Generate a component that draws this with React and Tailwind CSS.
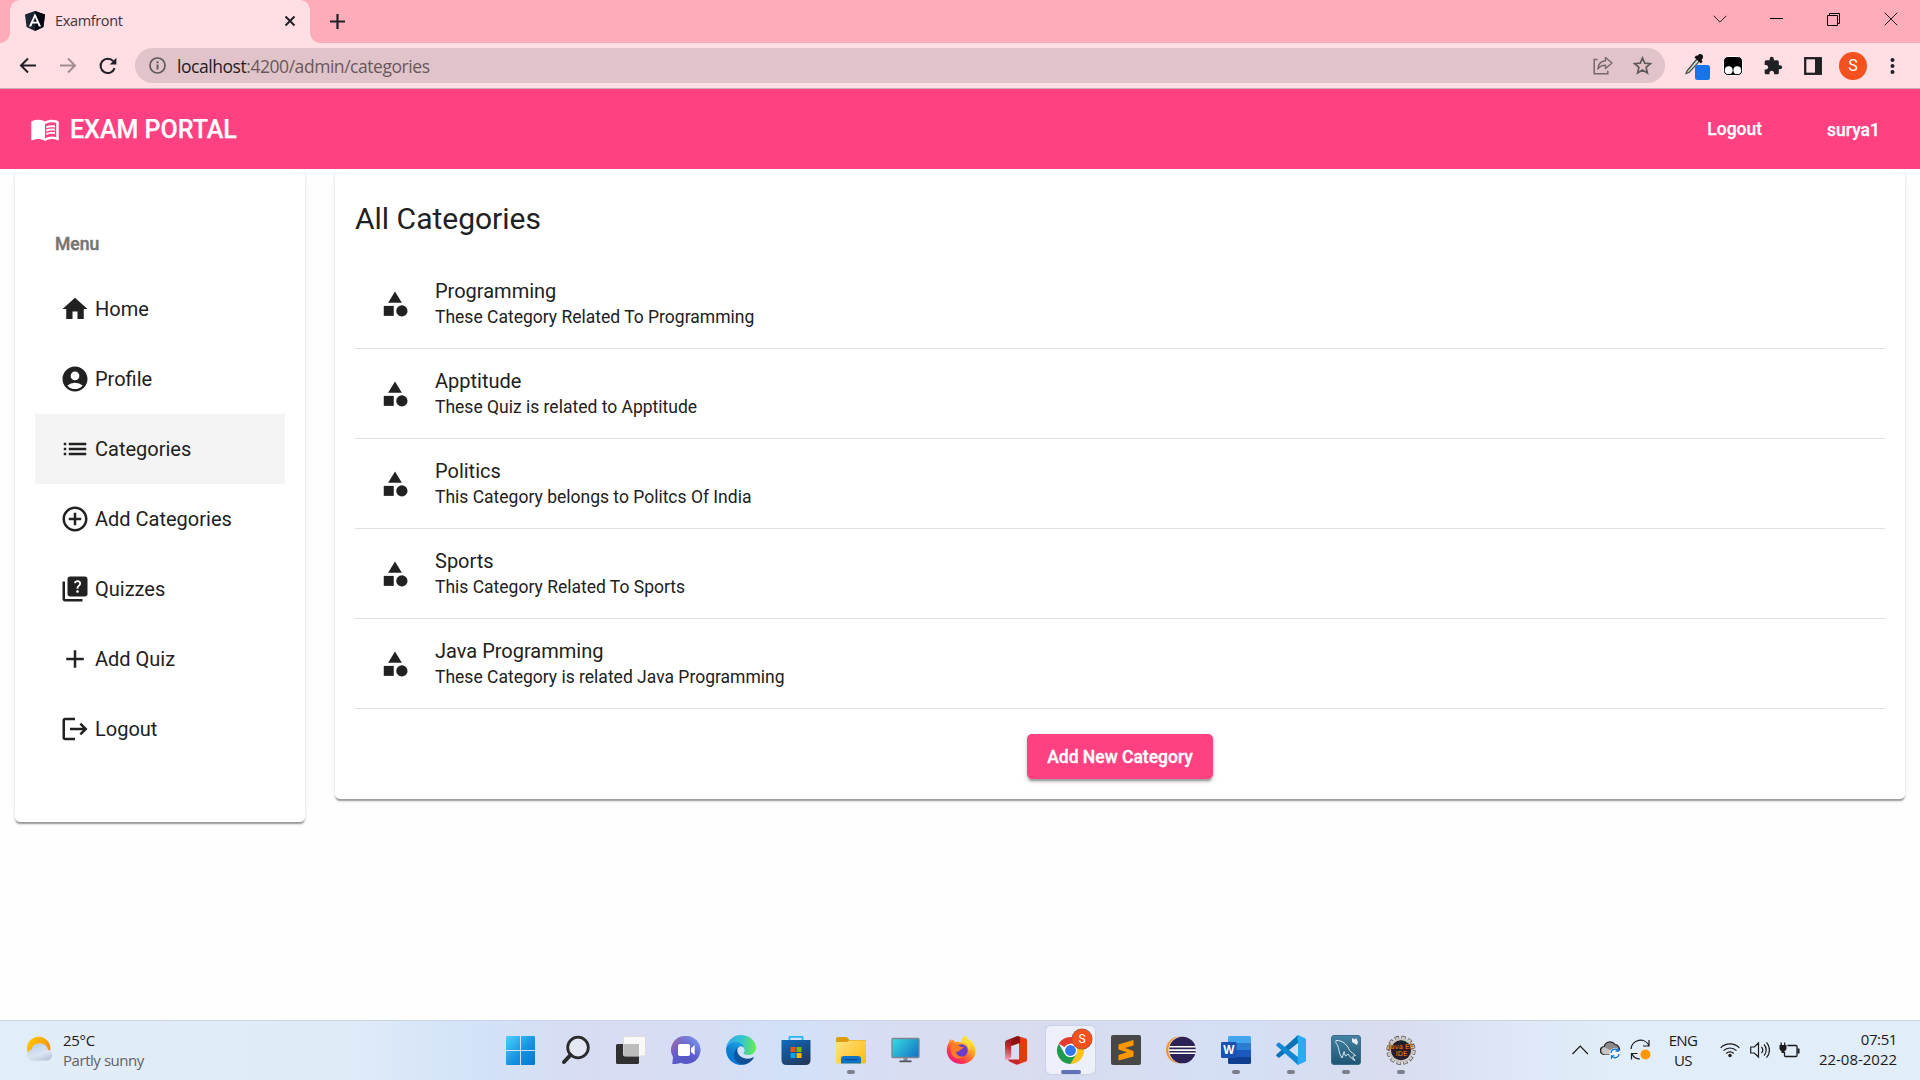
import React from "react";
import {
  MdHome,
  MdAccountCircle,
  MdList,
  MdAddCircleOutline,
  MdQuiz,
  MdAdd,
  MdLogout,
  MdCategory,
  MdMenuBook,
  MdExtension,
} from "react-icons/md";

const segoe = "font-['Open_Sans','Noto_Sans',sans-serif]";

function Svg({ w = 30, h = w, vb, className = "", children }) {
  return (
    <svg width={w} height={h} viewBox={vb || `0 0 ${w} ${h}`} className={`block shrink-0 ${className}`} fill="none">
      {children}
    </svg>
  );
}

/* ---------- Browser chrome ---------- */

function TabStrip() {
  return (
    <div className="flex h-[43px] bg-[#ffacba] pl-[10px]">
      <div className="relative flex h-[43px] w-[300px] items-center rounded-t-[10px] bg-[#ffdee4] pl-[15px] pr-[14px]">
        <div className="absolute -left-[10px] bottom-0 h-[10px] w-[10px] bg-[radial-gradient(circle_at_0_0,#ffacba_9.5px,#ffdee4_10px)]" />
        <div className="absolute -right-[10px] bottom-0 h-[10px] w-[10px] bg-[radial-gradient(circle_at_100%_0,#ffacba_9.5px,#ffdee4_10px)]" />
        <Svg w={20} className="-mt-[1px]">
          <path d="M10 0 20 3.4 18.4 16 10 20 1.6 16 0 3.4Z" fill="#1d2432" />
          <path d="M10 0 20 3.4 18.4 16 10 20Z" fill="#04070f" />
          <path d="M10 2.3 3.9 15.6h2.3l1.2-3h5.2l1.2 3h2.3Zm0 4.3 1.8 4.2H8.200Z" fill="#fff" fillRule="evenodd" />
        </Svg>
        <span className={`ml-[10px] flex-1 -mt-[2px] text-[14.5px] leading-5 tracking-[-0.35px] text-[#3c3237] ${segoe}`}>Examfront</span>
        <Svg w={12} className="-mt-[1px]">
          <path d="m1.500 1.500 9 9m0-9-9 9" stroke="#202124" strokeWidth="2" />
        </Svg>
      </div>
      <Svg w={16} className="ml-[19px] mt-[13px]">
        <path d="M8.500 1v15M1 8.500h15" stroke="#202124" strokeWidth="2.200" />
      </Svg>
      <div className="flex-1" />
      <div className="flex h-[37px] items-center">
        <div className="flex w-[57px] justify-center">
          <Svg w={14} h={8}>
            <path d="m.7.8 6.300 6.300L13.300.8" stroke="#222" />
          </Svg>
        </div>
        <div className="flex w-[57px] justify-center">
          <div className="h-px w-[13px] bg-black" />
        </div>
        <div className="flex w-[57px] justify-center">
          <Svg w={14}>
            <path d="M.5 3.500h10v10H.5zM2.500 3.500v-2h10v10h-2" stroke="#000" />
          </Svg>
        </div>
        <div className="flex w-[58px] justify-center">
          <Svg w={14}>
            <path d="m.7.7 12.600 12.600m0-12.600L.7 13.300" stroke="#222" />
          </Svg>
        </div>
      </div>
    </div>
  );
}

function Toolbar() {
  return (
    <div className="flex h-[46px] items-center border-b border-[#c3b2b8] bg-[#ffdee4] pl-[8px]">
      <div className="flex w-[39px] justify-center">
        <Svg w={18}>
          <path d="M17 8.500H2M9 1.500 2 8.500l7 7" stroke="#202124" strokeWidth="2" />
        </Svg>
      </div>
      <div className="flex w-[41px] justify-center">
        <Svg w={18}>
          <path d="M1 8.500h15M9 1.500l7 7-7 7" stroke="#a08d92" strokeWidth="2" />
        </Svg>
      </div>
      <div className="flex w-[40px] justify-center">
        <Svg w={18}>
          <path d="M15.600 11.200A7.200 7.200 0 1 1 14.300 4.200" stroke="#202124" strokeWidth="2" />
          <path d="M17.400.8v6.700h-6.700Z" fill="#202124" />
        </Svg>
      </div>
      <div className="ml-[7px] flex h-[35px] w-[1530px] items-center rounded-full bg-[#e0c4c9] pl-[14px] pr-[13px]">
        <Svg w={17}>
          <circle cx="8.500" cy="8.500" r="7.500" stroke="#5f5a5e" strokeWidth="1.700" />
          <path d="M8.500 7.500v5M8.500 4.300v1.900" stroke="#5f5a5e" strokeWidth="1.900" />
        </Svg>
        <div className={`ml-[11px] flex-1 text-[17.5px] leading-6 tracking-[-0.45px] text-[#68585d] ${segoe}`}>
          <span className="text-[#202124]">localhost</span>:4200/admin/categories
        </div>
        <Svg w={20} className="mr-[20px]">
          <path d="M4.500 3.500h-3.300v14.300h13.600v-3" stroke="#75686c" strokeWidth="1.500" />
          <path d="M12.500 1.500 19 7l-6.500 5.500V9.300c-3.500 0-6 1.200-7.700 3.700.4-4.700 3.200-8 7.700-8.300Z" stroke="#75686c" strokeWidth="1.400" strokeLinejoin="round" />
        </Svg>
        <Svg w={19}>
          <path d="m9.500 2 2.200 5.200 5.700.5-4.300 3.700 1.300 5.500-4.900-2.900-4.900 2.900 1.300-5.500L1.600 7.700l5.700-.5Z" stroke="#5f5a5e" strokeWidth="1.700" />
        </Svg>
      </div>
      <div className="ml-[8px] grid grid-cols-[40px_40px_40px_40px_40px_40px] items-center justify-items-center">
        <Svg w={26} h={30} className="ml-[9px]">
          <path d="M2 20 12 8l2.300 2.300L4 21.500l-3 1Z" fill="#cfe3d2" stroke="#3f4a43" strokeWidth="1.200" />
          <path d="m9.500 6.500 6.500 6 1.500-2-1-1.500c2-1.700 2-4 .7-5.200s-3.500-.8-4.700 1L11 4.500Z" fill="#161013" />
          <rect x="10" y="14" width="15" height="15" rx="2.500" fill="#1a73e8" />
        </Svg>
        <Svg w={20}>
          <rect x=".5" y=".5" width="19" height="19" rx="4.500" fill="#000" stroke="#fff" />
          <circle cx="5.700" cy="14.200" r="3.900" fill="#fff" />
          <circle cx="14.300" cy="14.200" r="3.900" fill="#fff" />
        </Svg>
        <MdExtension className="block h-[20px] w-[20px] text-[#202124]" />
        <Svg w={18}>
          <rect x="1.200" y="1.200" width="15.600" height="15.600" stroke="#202124" strokeWidth="2.300" />
          <path d="M11 1h6v16h-6z" fill="#202124" />
        </Svg>
        <div className="flex h-[28px] w-[28px] items-center justify-center rounded-full bg-[#f4511e] font-[Roboto,sans-serif] text-[16px] text-white">S</div>
        <Svg w={18}>
          <circle cx="8.500" cy="3" r="2" fill="#202124" />
          <circle cx="8.500" cy="9" r="2" fill="#202124" />
          <circle cx="8.500" cy="15" r="2" fill="#202124" />
        </Svg>
      </div>
    </div>
  );
}

/* ---------- Application ---------- */

const menu = [
  { label: "Home", Icon: MdHome },
  { label: "Profile", Icon: MdAccountCircle },
  { label: "Categories", Icon: MdList, active: true },
  { label: "Add Categories", Icon: MdAddCircleOutline },
  { label: "Quizzes", Icon: MdQuiz },
  { label: "Add Quiz", Icon: MdAdd },
  { label: "Logout", Icon: MdLogout },
];

const categories = [
  ["Programming", "These Category Related To Programming"],
  ["Apptitude", "These Quiz is related to Apptitude"],
  ["Politics", "This Category belongs to Politcs Of India"],
  ["Sports", "This Category Related To Sports"],
  ["Java Programming", "These Category is related Java Programming"],
];

const cardShadow =
  "shadow-[0_2.5px_1.25px_-1.25px_rgba(0,0,0,0.2),0_1.25px_1.25px_0_rgba(0,0,0,0.14),0_1.25px_3.75px_0_rgba(0,0,0,0.12)]";

function Header() {
  return (
    <header className="z-10 flex h-[80px] shrink-0 items-center bg-[#ff4081] pl-[30px] pr-[40px] text-white [-webkit-text-stroke:0.25px]">
      <MdMenuBook className="block h-[30px] w-[30px]" />
      <span className="ml-[10px] mt-[2px] text-[25px] font-medium leading-[30px]">EXAM PORTAL</span>
      <div className="flex-1" />
      <span className="text-[17.5px] font-medium leading-[22px]">Logout</span>
      <span className="ml-[65px] mt-[2px] text-[17.5px] font-medium leading-[22px]">surya1</span>
    </header>
  );
}

function Sidebar() {
  return (
    <aside className={`h-[653px] w-[290px] rounded-[5px] bg-white px-[20px] pt-[64px] ${cardShadow}`}>
      <div className="mb-[19px] pl-[20px] text-[17.5px] font-medium leading-[22px] text-[#757575] [-webkit-text-stroke:0.45px]">Menu</div>
      {menu.map(({ label, Icon, active }) => (
        <div key={label} className={`flex h-[70px] items-center pl-[25px] ${active ? "bg-[#f4f4f4]" : ""}`}>
          <Icon className="block h-[30px] w-[30px]" />
          <span className="ml-[5px] text-[20px] leading-6">{label}</span>
        </div>
      ))}
    </aside>
  );
}

function Categories() {
  return (
    <section className={`ml-[30px] h-[630px] w-[1570px] rounded-[5px] bg-white px-[20px] pt-[32px] ${cardShadow}`}>
      <h1 className="mb-[23px] text-[30px] leading-[35px]">All Categories</h1>
      {categories.map(([title, text]) => (
        <div key={title} className="flex h-[90px] items-center border-b border-[#e0e0e0] pl-[25px]">
          <MdCategory className="block h-[30px] w-[30px] shrink-0" />
          <div className="ml-[25px]">
            <div className="text-[20px] leading-[24px]">{title}</div>
            <div className="mt-[2px] text-[17.5px] leading-[24px]">{text}</div>
          </div>
        </div>
      ))}
      <div className="mt-[25px] flex justify-center">
        <button className="h-[45px] w-[186px] whitespace-nowrap rounded-[5px] bg-[#ff4081] pt-[2px] text-[17.5px] font-medium text-white shadow-[0_3.75px_1.25px_-2.5px_rgba(0,0,0,0.2),0_2.5px_2.5px_0_rgba(0,0,0,0.14),0_1.25px_6.25px_0_rgba(0,0,0,0.12)] [-webkit-text-stroke:0.35px]">
          Add New Category
        </button>
      </div>
    </section>
  );
}

/* ---------- Taskbar ---------- */

const Start = () => (
  <Svg>
    <defs>
      <linearGradient id="st" x1="0" y1="0" x2="30" y2="30" gradientUnits="userSpaceOnUse">
        <stop stopColor="#4fd2ff" />
        <stop offset=".55" stopColor="#1593e0" />
        <stop offset="1" stopColor="#0873cf" />
      </linearGradient>
    </defs>
    <path d="M1.300 1H14v14H0V2.300Q0 1 1.300 1ZM15 1h12.700q1.300 0 1.300 1.300V15H15ZM0 16h14v14H1.300Q0 30 0 28.700ZM15 16h14v12.700q0 1.300-1.300 1.300H15Z" fill="url(#st)" />
  </Svg>
);

const Search = () => (
  <Svg>
    <circle cx="17" cy="12.500" r="10.300" fill="#e3e8f3" stroke="#2b2b2e" strokeWidth="2.800" />
    <path d="m9.500 20-6.500 7" stroke="#2b2b2e" strokeWidth="4" strokeLinecap="round" />
  </Svg>
);

const TaskView = () => (
  <Svg>
    <rect x="0" y="9" width="23" height="20" rx="1.500" fill="#303030" />
    <rect x="7.500" y="1.500" width="22" height="19.500" rx="1.500" fill="#f8f8f6" stroke="#dcdcdc" />
    <path d="M7.500 9H23v12H9q-1.500 0-1.500-1.500Z" fill="#bcbcbc" />
  </Svg>
);

const Chat = () => (
  <Svg>
    <defs>
      <linearGradient id="ch" x1="4" y1="3" x2="27" y2="24" gradientUnits="userSpaceOnUse">
        <stop stopColor="#9a6bab" />
        <stop offset=".45" stopColor="#5c5bc9" />
        <stop offset="1" stopColor="#5754c8" />
      </linearGradient>
      <linearGradient id="ch2" x1="28" y1="3" x2="14" y2="18" gradientUnits="userSpaceOnUse">
        <stop stopColor="#86a6ee" />
        <stop offset="1" stopColor="#6a76dc" stopOpacity="0" />
      </linearGradient>
    </defs>
    <path d="M15.500 1a14 14 0 1 1-6 26.700c-3 1.300-6 1.600-8.200 1.300L2 22A14 14 0 0 1 15.500 1Z" fill="url(#ch)" />
    <path d="M15.500 1a14 14 0 1 1-6 26.700c-3 1.300-6 1.600-8.200 1.300L2 22A14 14 0 0 1 15.500 1Z" fill="url(#ch2)" />
    <rect x="7" y="9" width="12" height="12" rx="1.800" fill="#fff" />
    <path d="m20 13.300 3.700-3.300v10L20 17Z" fill="#fff" />
  </Svg>
);

const Edge = () => (
  <Svg vb="0 0 256 256">
    <defs>
      <linearGradient id="e1" x1="60" y1="176" x2="240" y2="176" gradientUnits="userSpaceOnUse">
        <stop stopColor="#0c59a4" />
        <stop offset="1" stopColor="#114a8b" />
      </linearGradient>
      <linearGradient id="e2" x1="120" y1="80" x2="40" y2="230" gradientUnits="userSpaceOnUse">
        <stop stopColor="#1b9de2" />
        <stop offset=".5" stopColor="#0f7fd3" />
        <stop offset="1" stopColor="#0078d7" />
      </linearGradient>
      <linearGradient id="e3" x1="10" y1="70" x2="255" y2="100" gradientUnits="userSpaceOnUse">
        <stop stopColor="#35a9e4" />
        <stop offset=".5" stopColor="#33c3d4" />
        <stop offset="1" stopColor="#66eb4f" />
      </linearGradient>
    </defs>
    <g transform="translate(-4.63 -4.92)">
      <path d="M235.680 195.460a93.730 93.730 0 0 1-10.540 4.710 101.870 101.870 0 0 1-35.900 6.460c-47.320 0-88.540-32.550-88.540-74.320A31.480 31.480 0 0 1 117.130 105c-42.800 1.800-53.800 46.400-53.800 72.530 0 73.880 68.090 81.370 82.760 81.370 7.910 0 19.840-2.300 27-4.560l1.310-.44a128.340 128.340 0 0 0 66.600-52.800 4 4 0 0 0-5.320-5.640Z" fill="url(#e1)" />
      <path d="M110.340 246.340A79.200 79.200 0 0 1 87.600 225a80.720 80.720 0 0 1 29.530-120c3.120-1.470 8.450-4.130 15.540-4a32.350 32.350 0 0 1 25.690 13 31.880 31.880 0 0 1 6.360 18.660c0-.21 24.460-79.600-80-79.600-43.900 0-80 41.660-80 78.210a130.150 130.150 0 0 0 12.110 56 128 128 0 0 0 156.380 67.110 75.550 75.550 0 0 1-62.780-8Z" fill="url(#e2)" />
      <path d="M156.940 153.780c-.81 1.050-3.300 2.500-3.300 5.660 0 2.610 1.700 5.120 4.720 7.230 14.380 10 41.490 8.680 41.560 8.680a59.560 59.560 0 0 0 30.270-8.350 61.380 61.380 0 0 0 30.430-52.880c.26-22.410-8-37.310-11.340-43.910C228.090 28.760 182.350 4.920 132.610 4.920a128 128 0 0 0-128 126.200c.48-36.540 36.800-66.050 80-66.050 3.500 0 23.460.34 42 10.070 16.340 8.580 24.900 18.940 30.850 29.210 6.180 10.670 7.280 24.150 7.280 29.520s-2.740 13.330-7.800 19.910Z" fill="url(#e3)" />
    </g>
  </Svg>
);

const Store = () => (
  <Svg>
    <defs>
      <linearGradient id="so" x1="8" y1="5" x2="20" y2="30" gradientUnits="userSpaceOnUse">
        <stop stopColor="#0f67b5" />
        <stop offset="1" stopColor="#21395f" />
      </linearGradient>
    </defs>
    <path d="M8.500 6V1.800h13V6" stroke="#29b6f0" strokeWidth="1.800" strokeLinejoin="round" />
    <path d="M.5 5h29v20q0 5-5 5h-19q-5 0-5-5Z" fill="url(#so)" />
    <path d="M9.500 12H14.500v5h-5z" fill="#f25022" />
    <path d="M15.500 12h5v5h-5z" fill="#7fba00" />
    <path d="M9.500 18H14.500v5h-5z" fill="#00a4ef" />
    <path d="M15.500 18h5v5h-5z" fill="#ffb900" />
  </Svg>
);

const Explorer = () => (
  <Svg>
    <defs>
      <linearGradient id="ex" x1="4" y1="6" x2="28" y2="28" gradientUnits="userSpaceOnUse">
        <stop stopColor="#ffdf77" />
        <stop offset="1" stopColor="#fdbc15" />
      </linearGradient>
    </defs>
    <path d="M0 3.500Q0 2 1.500 2H10q1 0 1.800 1l1.700 2H29q1 0 1 1v4H0Z" fill="#dd9d10" />
    <path d="M0 7h11l2.500-1.500H30v22q0 1-1 1H1q-1 0-1-1Z" fill="url(#ex)" />
    <path d="M5 28.500V24q0-3 3-3h14q3 0 3 3v4.500Z" fill="#0f73c4" />
    <path d="M9 24.700h12" stroke="#0a4e8d" strokeWidth="1.200" strokeLinecap="round" />
  </Svg>
);

const Monitor = () => (
  <Svg>
    <defs>
      <linearGradient id="mo" x1="2" y1="4" x2="26" y2="24" gradientUnits="userSpaceOnUse">
        <stop stopColor="#36d9e0" />
        <stop offset="1" stopColor="#1471c4" />
      </linearGradient>
    </defs>
    <path d="M12.500 22h4v4h-4z" fill="#8b9198" />
    <path d="M8.500 25.500h12v1.700h-12z" fill="#4c5258" />
    <rect x="1" y="3.500" width="27" height="19" rx="1" fill="url(#mo)" stroke="#7b8790" strokeWidth="1.300" />
  </Svg>
);

const Firefox = () => (
  <Svg>
    <defs>
      <linearGradient id="ff" x1="24" y1="4" x2="6" y2="28" gradientUnits="userSpaceOnUse">
        <stop stopColor="#fff044" />
        <stop offset=".35" stopColor="#ff9c1f" />
        <stop offset=".7" stopColor="#ff3f47" />
        <stop offset="1" stopColor="#e8118f" />
      </linearGradient>
    </defs>
    <path d="M19 .5c2 1 3.500 3 4.200 5 .8-.3 1.300-.3 1.600-.2 3.200 3 4.700 7 4.700 10.700C29.500 23.500 23 29 15.500 29 7 29 .8 23 .8 15.500c0-3.500.9-6.700 2.700-9 .1-1 .2-1.700.6-2.500.7.6 1.200 1.400 1.500 2.200C6.500 5.300 7 5 7.700 4.600c.1 1.200.8 2.200 1.800 2.600 2-.7 4.500-.6 6 .3C15.300 4.500 17 2 19 .5Z" fill="url(#ff)" />
    <circle cx="15.500" cy="15.500" r="6.300" fill="#6a3cc8" />
    <path d="M4.500 10.500c3.500-2 8-1 10.500 1.500h3c-1 2.200-3.500 2.200-4.500 3.500-.7 1.500-3 1.500-3.500 1.500.5 3 3 5.500 7.500 4.500-4 4-10.500 1.500-12-3-.5-2-.7-4-1-8Z" fill="#ff7a25" />
    <path d="M15.500 8c4-1 8 2.500 7.300 8 2-3 1.500-6 .2-8.500-1-2-2.500-3.500-4-7C15.500 3 15 5.500 15.500 8Z" fill="#ffdc3a" />
  </Svg>
);

const Office = () => (
  <Svg>
    <defs>
      <linearGradient id="of" x1="15" y1="1" x2="5" y2="25" gradientUnits="userSpaceOnUse">
        <stop stopColor="#7a0d12" />
        <stop offset=".5" stopColor="#c6262c" />
        <stop offset="1" stopColor="#f4a3c6" />
      </linearGradient>
    </defs>
    <path d="M16.500 1v6.500L10.200 10v12.500L5.500 25.200 4 24V7.500q0-1.500 1.500-2.300Z" fill="url(#of)" />
    <path d="M16.500 1 25 3.500q1 .4 1 1.500v20q0 1-1 1.500L18 29V7.500Z" fill="#e03e0c" />
    <path d="M16.500 1 19 2v6l-8.800 3V7.500Z" fill="#8a1213" />
    <path d="M7 24.500h11.500V29l-3 .7-7.500-3.500Z" fill="#c9242b" />
  </Svg>
);

const Chrome = () => (
  <Svg>
    <path d="M14.500 15.500 2.800 8.750A13.500 13.500 0 0 1 26.200 8.750H14.500Z" fill="#e33b2e" />
    <path d="M20.350 18.880 14.500 29A13.500 13.500 0 0 0 26.200 8.750H14.500Z" fill="#fcc31e" />
    <path d="M8.650 18.880 2.800 8.750A13.500 13.500 0 0 0 14.500 29l5.850-10.120Z" fill="#1f9a4c" />
    <circle cx="14.500" cy="15.500" r="6.750" fill="#fff" />
    <circle cx="14.500" cy="15.500" r="5.400" fill="#3079ec" />
  </Svg>
);

const Sublime = () => (
  <Svg>
    <rect width="30" height="30" rx="2" fill="#474747" />
    <path d="M22.500 5v5.500L14 13l8.500 3v5.500L7.500 25.500V20l8.500-2.800-8.500-2.700V9.500Z" fill="#ff9800" />
  </Svg>
);

const Eclipse = () => (
  <Svg>
    <circle cx="13.500" cy="15" r="13.500" fill="#f7941e" />
    <circle cx="16" cy="15" r="13.700" fill="#d9ddf0" />
    <circle cx="16.500" cy="15" r="13.300" fill="#2c2255" />
    <path d="M3.500 11h26.300v1.500H3.200zM3 14.300h27v1.600H3zM3.200 17.500h26.500V19H3.500z" fill="#fff" />
  </Svg>
);

const Word = () => (
  <Svg>
    <path d="M7 2.500Q7 1 8.500 1h20Q30 1 30 2.500V8H7Z" fill="#41a5ee" />
    <path d="M7 8h23v7H7z" fill="#2b7cd3" />
    <path d="M7 15h23v7H7z" fill="#185abd" />
    <path d="M7 22h23v5.500q0 1.500-1.500 1.500h-20Q7 29 7 27.500Z" fill="#103f91" />
    <rect x="0" y="7" width="15.500" height="16" rx="1.300" fill="#1a52b3" />
    <text x="7.700" y="19" textAnchor="middle" fill="#fff" fontSize="11.500" fontWeight="700" fontFamily="Open Sans, sans-serif">W</text>
  </Svg>
);

const Vscode = () => (
  <Svg>
    <path d="M22 0v8L3.500 22.500q-.7.500-1.300 0L.5 21q-.7-.8 0-1.500Z" fill="#0b72b8" />
    <path d="M22 30v-8L3.500 7.700q-.7-.5-1.300 0L.5 9.200q-.7.800 0 1.500Z" fill="#1289d2" />
    <path d="M22 0 29 3.200q1 .5 1 1.500v20.600q0 1-1 1.500L22 30Z" fill="#29aaf2" />
    <path d="m22 0-1.500 1.500L22 7.500v15l-1.500 6L22 30Z" fill="#1b95dd" />
  </Svg>
);

const Workbench = () => (
  <Svg>
    <defs>
      <linearGradient id="wb" x1="0" y1="0" x2="0" y2="30" gradientUnits="userSpaceOnUse">
        <stop stopColor="#4683a4" />
        <stop offset="1" stopColor="#1e5470" />
      </linearGradient>
    </defs>
    <rect x=".5" y=".5" width="29" height="29" rx="2.500" fill="url(#wb)" stroke="#3b6d88" />
    <path d="M5 5.500c6-.5 11 3.500 13.500 10 1.500 1.700 4 3 6 5-2 .3-2.500.5-3 1.500l2.500 3.500c-2.500-1-5-3.500-7-6.500l-2.500 2c-1-1.500-1-3-1.300-4.500L11 23C7 17 8.500 13 6 9.500 5 8 4.500 7 5 5.500Z" stroke="#d9e8f0" strokeWidth="1" />
    <path d="m21 3 2.500 1.500L25 3l2 4-1 3-5-3Z" fill="#e8f1f5" />
  </Svg>
);

const JavaEE = () => (
  <Svg>
    <circle cx="15" cy="15.300" r="12.600" stroke="#57524f" strokeWidth="4" strokeDasharray="4.200 2.400" />
    <circle cx="15" cy="15.300" r="12.600" stroke="#d0cdc8" strokeWidth="2.600" strokeDasharray="3 3.600" strokeDashoffset="-.6" />
    <circle cx="15" cy="15.300" r="11" fill="#2b2430" stroke="#c9c6c2" strokeWidth="2" />
    <circle cx="15" cy="15.300" r="9.700" fill="#281f2c" />
    <g fill="#f5831f" stroke="#3a1c08" strokeWidth=".6" paintOrder="stroke" fontFamily="DejaVu Sans, sans-serif" fontSize="6.800" textAnchor="middle">
      <text x="15" y="14.300" textLength="25">Java EE</text>
      <text x="15.500" y="20.500">IDE</text>
    </g>
  </Svg>
);

const apps = [
  [Start], [Search], [TaskView], [Chat], [Edge], [Store], [Explorer, "run"], [Monitor], [Firefox], [Office],
  [Chrome, "active"], [Sublime], [Eclipse], [Word, "run"], [Vscode, "run"], [Workbench, "run"], [JavaEE, "run"],
];

function TaskApp({ Icon, state }) {
  return (
    <div className="flex w-[55px] justify-center">
      <div className={`relative flex h-[48px] w-[49px] items-center justify-center rounded-[5px] ${state === "active" ? "bg-[#edf0f9] shadow-[0_0_1px_1px_rgba(160,170,200,0.25)]" : ""}`}>
        <Icon />
        {state === "active" && (
          <span className="absolute right-[3px] top-[3px] flex h-[20px] w-[20px] items-center justify-center rounded-full bg-[#f4511e] font-[Roboto,sans-serif] text-[12px] text-white ring-[0.5px] ring-[#8a5a50]">
            S
          </span>
        )}
        {state === "run" && <span className="absolute bottom-0 h-[4px] w-[8px] rounded-full bg-[#7c808d]" />}
        {state === "active" && <span className="absolute bottom-0 h-[4px] w-[20px] rounded-full bg-[#6171b8]" />}
      </div>
    </div>
  );
}

function Tray() {
  return (
    <div className="flex h-full items-center text-[#1b1b1b]">
      <Svg w={17} h={10}>
        <path d="m.5 9 7.700-8 7.700 8" stroke="#1b1b1b" strokeWidth="1.200" />
      </Svg>
      <Svg w={21} h={20} className="ml-[11px]">
        <path d="M4.500 14.500a4 4 0 0 1-.3-8A6 6 0 0 1 15 4.500a5 5 0 0 1 4.500 5.500v4.500Z" fill="#8a8a8a" stroke="#222" strokeWidth="1.200" />
        <path d="m4 7 6 3 8 4.500H4.500a4 4 0 0 1-.5-7.500Z" fill="#c6c6c6" />
        <circle cx="15" cy="13.500" r="5.500" fill="#eef5fc" />
        <path d="M11 13a4 4 0 0 1 7.300-2M19 14a4 4 0 0 1-7.300 2M18.500 8v3.200h-3M11.500 19v-3.200h3" stroke="#1271c4" strokeWidth="1.200" />
      </Svg>
      <Svg w={21} h={22} className="ml-[9px]">
        <path d="M1 10A9.500 9.500 0 0 1 19 6.500M19 1v6h-6M10 20a9 9 0 0 1-8-5M1.500 20.500v-6h6" stroke="#1b1b1b" strokeWidth="1.200" />
        <circle cx="15.500" cy="15.500" r="5" fill="#ff9800" />
      </Svg>
      <div className={`ml-[14px] w-[36px] whitespace-nowrap text-center text-[15px] leading-[20px] tracking-[-0.6px] ${segoe}`}>
        ENG
        <br />
        US
      </div>
      <Svg w={20} h={16} className="ml-[19px]">
        <path d="M.7 5.800a13.200 13.200 0 0 1 18.600 0M3.500 8.700a9.200 9.200 0 0 1 13 0M6.300 11.500a5.200 5.200 0 0 1 7.400 0" stroke="#1b1b1b" strokeWidth="1.200" />
        <circle cx="10" cy="13.500" r="1.700" fill="#1b1b1b" />
      </Svg>
      <Svg w={20} h={18} className="ml-[10px]">
        <path d="M.7 6v6h3.600L8.500 16V2L4.300 6ZM11.500 6a4.500 4.500 0 0 1 0 6M14 3.500a8 8 0 0 1 0 11M16.500 1.300a11.500 11.500 0 0 1 0 15.400" stroke="#1b1b1b" strokeWidth="1.200" />
      </Svg>
      <Svg w={21} h={16} className="ml-[9px]">
        <path d="M8.500 3.500H17q1 0 1 1v9q0 1-1 1H6.500q-1 0-1-1V10" stroke="#1b1b1b" strokeWidth="1.300" />
        <path d="M18.500 6.500h2v5h-2zM.5 3h7v3.500q0 2-2 2.500v2h-3V9q-2-.5-2-2.500ZM1.500.5h1.300v3H1.500zM5 .5h1.300v3H5z" fill="#1b1b1b" />
      </Svg>
      <div className={`ml-[14px] w-[83px] whitespace-nowrap text-right text-[15px] leading-[20px] ${segoe}`}>
        <div className="-mt-[2px] tracking-[-0.4px]">07:51</div>
        <div className="tracking-[-0.02px]">22-08-2022</div>
      </div>
    </div>
  );
}

function Weather() {
  return (
    <div className="flex w-[493px] items-center pl-[25px]">
      <Svg w={30} h={26} className="-mt-[3px]">
        <defs>
          <linearGradient id="sun" x1="4" y1="2" x2="26" y2="16" gradientUnits="userSpaceOnUse">
            <stop stopColor="#ffc800" />
            <stop offset="1" stopColor="#f48b0a" />
          </linearGradient>
          <linearGradient id="cl" x1="12" y1="8" x2="18" y2="25" gradientUnits="userSpaceOnUse">
            <stop stopColor="#bcd3f3" />
            <stop offset=".6" stopColor="#dbe4f1" />
            <stop offset="1" stopColor="#b9c7dc" />
          </linearGradient>
        </defs>
        <circle cx="13.700" cy="12.500" r="11.700" fill="url(#sun)" />
        <path d="M7 24.500a5.500 5.500 0 0 1-.5-10.800 8.500 8.500 0 0 1 16.500 0 5.600 5.600 0 0 1 0 10.800Z" fill="url(#cl)" />
      </Svg>
      <div className={`-mt-px ml-[8px] text-[15px] leading-[20px] ${segoe}`}>
        <div className="tracking-[-0.3px] text-[#1b1b1b]">25°C</div>
        <div className="tracking-[-0.45px] text-[#5d6165]">Partly sunny</div>
      </div>
    </div>
  );
}

function Taskbar() {
  return (
    <footer className="h-[60px] shrink-0 border-t border-[#c9d6e8] bg-[linear-gradient(90deg,#e1edf8_0%,#e0ebf8_18%,#d2e2f8_25%,#d8dcf2_31%,#d6ddf4_36%,#d2e1f8_41%,#d8ddf2_47%,#d8dcee_54%,#d4dff6_64%,#d8dcee_72%,#dde6f6_78%,#e1edf9_84%,#e1edf8_100%)]">
      <div className="flex h-[58px] items-center">
        <Weather />
        <div className="flex">
          {apps.map(([Icon, state], i) => (
            <TaskApp key={i} Icon={Icon} state={state} />
          ))}
        </div>
        <div className="ml-auto h-full pr-[23px]">
          <Tray />
        </div>
      </div>
    </footer>
  );
}

export default function App() {
  return (
    <div className="flex h-[1080px] w-[1920px] flex-col overflow-hidden bg-white font-[Roboto,sans-serif] text-[#212121]">
      <TabStrip />
      <Toolbar />
      <Header />
      <main className="flex flex-1 items-start bg-[#fefefe] px-[15px]">
        <Sidebar />
        <Categories />
      </main>
      <Taskbar />
    </div>
  );
}
